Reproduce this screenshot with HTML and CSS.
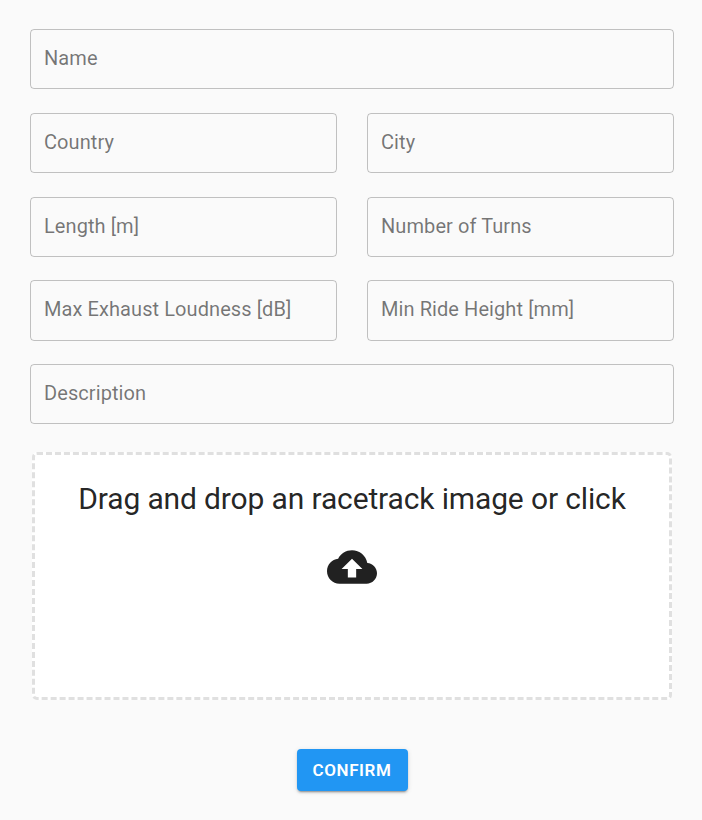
FILE: index.html
```html
<!DOCTYPE html>
<html lang="en">
<head>
<meta charset="utf-8">
<title>Racetrack</title>
<link rel="stylesheet" href="styles.css">
</head>
<body>
<form class="form">
  <div class="fields">
    <div class="field wide"><label class="label">Name</label></div>
    <div class="field"><label class="label">Country</label></div>
    <div class="field"><label class="label">City</label></div>
    <div class="field"><label class="label">Length [m]</label></div>
    <div class="field"><label class="label">Number of Turns</label></div>
    <div class="field"><label class="label">Max Exhaust Loudness [dB]</label></div>
    <div class="field"><label class="label">Min Ride Height [mm]</label></div>
    <div class="field wide"><label class="label">Description</label></div>
  </div>
  <div class="dropzone">
    <p class="dropzone-text">Drag and drop an racetrack image or click</p>
    <svg class="upload-icon" viewBox="0 0 24 24" aria-hidden="true"><path d="M19.35 10.04C18.67 6.59 15.64 4 12 4 9.11 4 6.6 5.64 5.35 8.04 2.34 8.36 0 10.91 0 14c0 3.31 2.69 6 6 6h13c2.76 0 5-2.24 5-5 0-2.64-2.05-4.78-4.65-4.96zM14 13v4h-4v-4H7l5-5 5 5h-3z"/></svg>
  </div>
  <button class="confirm" type="button">CONFIRM</button>
</form>
</body>
</html>
```
FILE: styles.css
```css
* {
  box-sizing: border-box;
}

body {
  margin: 0;
  background: #fafafa;
  font-family: Roboto, sans-serif;
  color: rgba(0, 0, 0, 0.87);
}

.form {
  display: flex;
  flex-direction: column;
  align-items: center;
  height: 820px;
  padding: 29px 28px 0 30px;
}

.fields {
  display: grid;
  grid-template-columns: 1fr 1fr;
  grid-auto-rows: 60.2px;
  gap: 23.6px 30px;
  width: 100%;
}

.field {
  padding: 17px 13px 0;
  border: 1px solid rgba(0, 0, 0, 0.23);
  border-radius: 4px;
}

.wide {
  grid-column: 1 / -1;
}

.label {
  display: block;
  font-size: 20px;
  line-height: 23px;
  letter-spacing: 0.08px;
  color: rgba(0, 0, 0, 0.54);
}

.dropzone {
  display: flex;
  flex-direction: column;
  align-items: center;
  width: 640px;
  height: 248px;
  margin-top: 27.6px;
  border: 3px dashed rgba(0, 0, 0, 0.12);
  border-radius: 5px;
  background: #fff;
}

.dropzone-text {
  margin: 24px 0 23px;
  font-size: 30px;
  line-height: 40px;
  letter-spacing: -0.14px;
  white-space: nowrap;
}

.upload-icon {
  width: 50px;
  height: 50px;
  fill: #212121;
}

.confirm {
  width: 111px;
  height: 42px;
  margin-top: 49px;
  padding: 0;
  border: 0;
  border-radius: 4px;
  background: #2196f3;
  box-shadow: 0 3px 1px -2px rgba(0, 0, 0, 0.2), 0 2px 2px 0 rgba(0, 0, 0, 0.14), 0 1px 5px 0 rgba(0, 0, 0, 0.12);
  font: 600 17px/30px Roboto, sans-serif;
  letter-spacing: 0.6px;
  color: #fff;
}
```
